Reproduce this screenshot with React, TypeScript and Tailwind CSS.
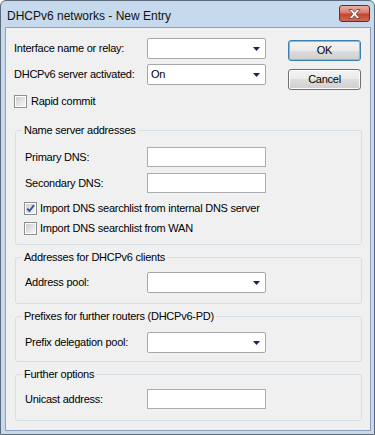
import type { ReactNode } from "react";

function Arrow() {
    return (
        <svg width="7" height="4" viewBox="0 0 7 4" className="block shrink-0">
            <path d="M0 0H7L3.5 4Z" fill="#1b2352" />
        </svg>
    );
}

function Combo({ value }: { value?: string }) {
    return (
        <div className="flex h-[21px] w-[119px] shrink-0 items-center justify-between rounded-[2px] border border-[#a7a7a7] bg-white pl-[3px] pr-[5px]">
            <span>{value}</span>
            <Arrow />
        </div>
    );
}

function TextBox() {
    return <div className="h-[20px] w-[119px] shrink-0 border border-[#abadb3] bg-white" />;
}

function Check({ checked }: { checked?: boolean }) {
    return (
        <span className="flex h-[13px] w-[13px] shrink-0 items-center justify-center border border-[#8e8f8f] bg-white">
            <span className="flex h-[9px] w-[9px] items-center justify-center bg-gradient-to-br from-[#cbcfd5] to-[#f6f6f6]">
                {checked && (
                    <svg width="9" height="9" viewBox="0 0 9 9" className="block overflow-visible">
                        <path d="M1.2 4.6 L3.4 7 L8 1.2" fill="none" stroke="#3b5398" strokeWidth="1.9" />
                    </svg>
                )}
            </span>
        </span>
    );
}

function Button({ label, primary }: { label: string; primary?: boolean }) {
    return (
        <div
            className={
                "flex h-[21px] w-[73px] items-center justify-center rounded-[3px] border bg-[linear-gradient(#f2f2f2,#ebebeb_50%,#dddddd_50%,#cfcfcf)] " +
                (primary
                    ? "border-[#3c7fb1] shadow-[inset_0_0_0_1px_#4fd3f5]"
                    : "border-[#707070] shadow-[inset_0_0_0_1px_#fbfbfb]")
            }
        >
            {label}
        </div>
    );
}

function CloseButton() {
    return (
        <div className="ml-auto mr-[1px] mt-[4px] flex h-[17px] w-[31px] items-center justify-center self-start rounded-[3px] border border-[#6e2b22] bg-[linear-gradient(#eab0a3,#d77a68_45%,#c5452f_55%,#cf6a55)]">
            <svg width="13" height="10" viewBox="0 0 13 10" className="block">
                <path
                    d="M1 0.5H4.2L6.5 3.3L8.8 0.5H12L8.2 5L12 9.5H8.8L6.5 6.7L4.2 9.5H1L4.8 5Z"
                    fill="#ffffff"
                    stroke="#6b3b33"
                    strokeWidth="0.8"
                    strokeLinejoin="round"
                />
            </svg>
        </div>
    );
}

function Group({ title, className, children }: { title: string; className: string; children: ReactNode }) {
    return (
        <fieldset className={"ml-[9px] mr-[8px] rounded-[3px] border border-[#d5dfe5] " + className}>
            <legend className="ml-[6px] px-[2px] leading-[13px]">{title}</legend>
            {children}
        </fieldset>
    );
}

function Field({ label, children }: { label: string; children: ReactNode }) {
    return (
        <div className="flex items-center pl-[9px]">
            <span className="w-[122px] shrink-0">{label}</span>
            {children}
        </div>
    );
}

export default function App() {
    return (
        <div className="h-[435px] w-[375px] font-['Liberation_Sans',Arial,sans-serif] text-[11px] text-black">
            <div className="flex h-full w-full flex-col rounded-t-[6px] border border-[#5c6a7b] bg-[#c6d9ed] pb-[3px] pl-[4px] pr-[3px]">
                <div className="flex h-[26px] shrink-0 items-center">
                    <span className="pl-[2px] pt-[3px] text-[12px] text-[#111]">DHCPv6 networks - New Entry</span>
                    <CloseButton />
                </div>

                <div className="flex-1 border border-[#8ba0bc] bg-[#f0f0f0] tracking-[-0.25px]">
                    <div className="flex items-start pl-[8px] pt-[10px]">
                        <div className="flex flex-col">
                            <div className="flex items-center">
                                <span className="w-[133px] shrink-0">Interface name or relay:</span>
                                <Combo />
                            </div>
                            <div className="mt-[5px] flex items-center">
                                <span className="w-[133px] shrink-0">DHCPv6 server activated:</span>
                                <Combo value="On" />
                            </div>
                            <div className="mt-[10px] flex h-[13px] items-center gap-[4px]">
                                <Check />
                                <span>Rapid commit</span>
                            </div>
                        </div>
                        <div className="ml-[22px] flex flex-col gap-[8px] pt-[2px]">
                            <Button label="OK" primary />
                            <Button label="Cancel" />
                        </div>
                    </div>

                    <Group title="Name server addresses" className="mt-[16px]">
                        <div className="flex flex-col pb-[9px] pt-[10px]">
                            <Field label="Primary DNS:">
                                <TextBox />
                            </Field>
                            <div className="mt-[6px]">
                                <Field label="Secondary DNS:">
                                    <TextBox />
                                </Field>
                            </div>
                            <div className="ml-[8px] mt-[9px] flex h-[13px] items-center gap-[3px]">
                                <Check checked />
                                <span>Import DNS searchlist from internal DNS server</span>
                            </div>
                            <div className="ml-[8px] mt-[7px] flex h-[13px] items-center gap-[3px]">
                                <Check />
                                <span>Import DNS searchlist from WAN</span>
                            </div>
                        </div>
                    </Group>

                    <Group title="Addresses for DHCPv6 clients" className="mt-[6px]">
                        <div className="pb-[10px] pt-[8px]">
                            <Field label="Address pool:">
                                <Combo />
                            </Field>
                        </div>
                    </Group>

                    <Group title="Prefixes for further routers (DHCPv6-PD)" className="mt-[6px]">
                        <div className="pb-[8px] pt-[9px]">
                            <Field label="Prefix delegation pool:">
                                <Combo />
                            </Field>
                        </div>
                    </Group>

                    <Group title="Further options" className="mt-[6px]">
                        <div className="pb-[11px] pt-[8px]">
                            <Field label="Unicast address:">
                                <TextBox />
                            </Field>
                        </div>
                    </Group>
                </div>
            </div>
        </div>
    );
}
